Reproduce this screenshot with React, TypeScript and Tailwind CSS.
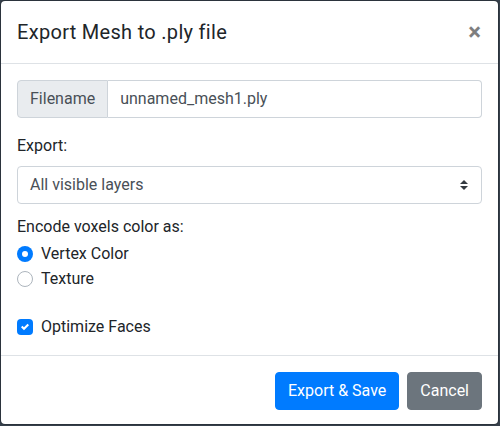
export default function App() {
  return (
    <div className="w-[500px] h-[426px] bg-[#36404b] font-['Roboto',sans-serif] text-[#212529] text-[16px] leading-6">
      <div className="flex h-[425px] w-[499px] flex-col rounded-[5px] border border-black/20 bg-white bg-clip-padding">
        {/* header */}
        <div className="flex items-start justify-between border-b border-[#dee2e6] p-4">
          <h5 className="text-[20px] leading-[30px] font-normal tracking-[0.3px]">Export Mesh to .ply file</h5>
          <button className="-m-4 ml-auto p-4 pr-[17px] text-[24px] leading-[30px] font-bold text-black opacity-50">
            ×
          </button>
        </div>

        {/* body */}
        <div className="flex-1 p-4">
          <div className="flex h-[38px]">
            <span className="flex items-center rounded-l-[4px] border border-[#ced4da] bg-[#e9ecef] px-3 text-[#495057]">
              Filename
            </span>
            <div className="flex flex-1 items-center rounded-r-[4px] border border-l-0 border-[#ced4da] px-3 text-[#495057]">
              unnamed_mesh1.ply
            </div>
          </div>

          <div className="mt-4 mb-2">Export:</div>
          <div className="flex h-[38px] items-center justify-between rounded-[4px] border border-[#ced4da] pl-3 pr-3 text-[#495057]">
            <span>All visible layers</span>
            <svg width="8" height="10" viewBox="0 0 4 5" className="mr-[1px]">
              <path d="M2 0L0 2h4zm0 5L0 3h4z" fill="#343a40" />
            </svg>
          </div>

          <div className="mt-[11px]">Encode voxels color as:</div>
          <div className="mt-[3px] flex items-center gap-2">
            <span className="flex h-4 w-4 items-center justify-center rounded-full bg-[#007bff]">
              <span className="h-[6px] w-[6px] rounded-full bg-white" />
            </span>
            <span>Vertex Color</span>
          </div>
          <div className="mt-[1px] flex items-center gap-2">
            <span className="h-4 w-4 rounded-full border border-[#adb5bd] bg-white" />
            <span>Texture</span>
          </div>

          <div className="mt-6 flex items-center gap-2">
            <span className="flex h-4 w-4 items-center justify-center rounded-[4px] bg-[#007bff]">
              <svg width="8" height="8" viewBox="0 0 8 8">
                <path d="M6.564.75l-3.59 3.612-1.538-1.55L0 4.26 2.974 7.25 8 2.193z" fill="#fff" />
              </svg>
            </span>
            <span>Optimize Faces</span>
          </div>
        </div>

        {/* footer */}
        <div className="flex items-center justify-end gap-2 border-t border-[#dee2e6] px-4 py-4">
          <button className="h-[38px] rounded-[4px] border border-[#007bff] bg-[#007bff] px-3 text-white">
            Export &amp; Save
          </button>
          <button className="h-[38px] rounded-[4px] border border-[#6c757d] bg-[#6c757d] px-3 text-white">
            Cancel
          </button>
        </div>
      </div>
    </div>
  );
}
